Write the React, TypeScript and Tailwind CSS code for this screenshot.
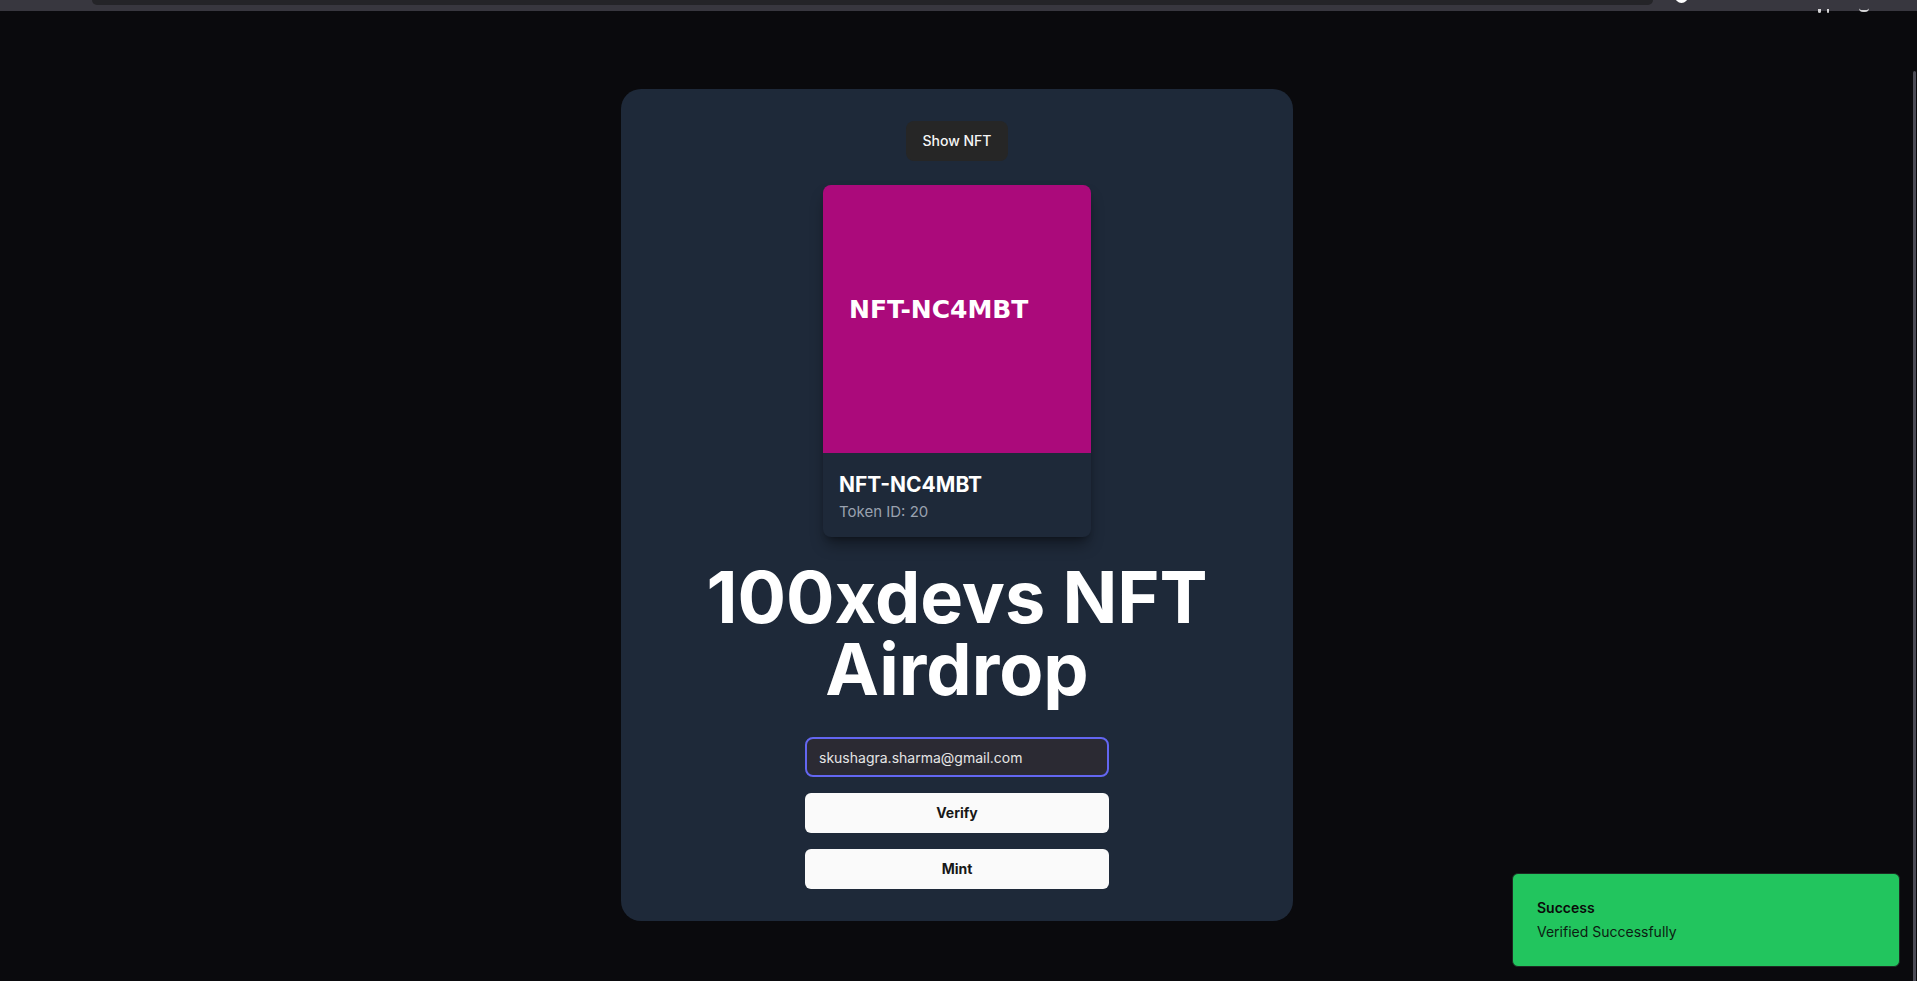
import React, { useState } from "react";

function NftPreview({ name, tokenId }: { name: string; tokenId: number }) {
  return (
    <div className="w-[268px] overflow-hidden rounded-lg bg-gray-800 shadow-lg shadow-black/40">
      <svg width="268" height="268" viewBox="0 0 268 268" className="block">
        <rect width="268" height="268" fill="#ab0a7b" />
        <text
          x="26"
          y="133"
          fill="#ffffff"
          fontSize="25"
          fontWeight="bold"
          fontFamily="'DejaVu Sans', sans-serif"
        >
          {name}
        </text>
      </svg>
      <div className="px-4 pt-[18px] pb-[15px]">
        <h3 className="text-[21px] leading-7 font-bold text-white">{name}</h3>
        <p className="mt-[3px] text-[15px] leading-5 text-gray-400">Token ID: {tokenId}</p>
      </div>
    </div>
  );
}

export default function App() {
  const [email, setEmail] = useState("skushagra.sharma@gmail.com");

  return (
    <div className="relative flex h-screen flex-col overflow-hidden bg-[#0a0a0d] font-['Inter',sans-serif]">
      {/* browser strip */}
      <div className="relative flex h-[11px] shrink-0 items-start bg-[#38373f]">
        <div className="ml-[92px] h-[5px] w-[1561px] rounded-b-lg bg-[#242428]"></div>
        <div className="ml-[22px] -mt-[10px] h-[13px] w-[13px] rounded-full bg-white"></div>
        <div className="absolute top-[9px] left-[1818px] h-[4px] w-[3px] rounded-b-sm bg-white/80"></div>
        <div className="absolute top-[9px] left-[1827px] h-[4px] w-[2px] rounded-b-sm bg-white/80"></div>
        <div className="absolute top-[8px] left-[1859px] h-[4px] w-[10px] rounded-b-full border-b-2 border-white/80"></div>
      </div>

      <div className="flex justify-center pt-[78px] pr-[3px]">
        <div className="flex w-[672px] flex-col items-center rounded-[20px] bg-gray-800 p-8">
          <button className="h-10 rounded-lg bg-neutral-800 px-4 text-sm font-medium text-neutral-100">
            Show NFT
          </button>

          <div className="mt-6">
            <NftPreview name="NFT-NC4MBT" tokenId={20} />
          </div>

          <h1 className="mt-6 text-center text-7xl leading-none font-bold text-white">
            100xdevs NFT Airdrop
          </h1>

          <div className="mt-8 flex w-[304px] flex-col gap-4">
            <input
              value={email}
              onChange={(e) => setEmail(e.target.value)}
              className="h-10 rounded-lg border-2 border-[#6366f1] bg-[#2b2a33] px-3 text-sm text-neutral-200 outline-none"
            />
            <button className="h-10 rounded-md bg-neutral-50 text-sm font-bold text-neutral-900">
              Verify
            </button>
            <button className="h-10 rounded-md bg-neutral-50 text-sm font-bold text-neutral-900">
              Mint
            </button>
          </div>
        </div>
      </div>

      {/* toast */}
      <div className="fixed right-[17px] bottom-[14px] w-[388px] rounded-md border border-[#1c2b22] bg-[#22c55e] p-6 text-[#0a0a0a]">
        <div className="text-sm font-semibold">Success</div>
        <div className="mt-1 text-sm opacity-90">Verified Successfully</div>
      </div>

      {/* scroll thumb */}
      <div className="fixed top-[71px] right-[1px] bottom-0 w-[3px] rounded-t-sm bg-[#4c4c56]"></div>
    </div>
  );
}
